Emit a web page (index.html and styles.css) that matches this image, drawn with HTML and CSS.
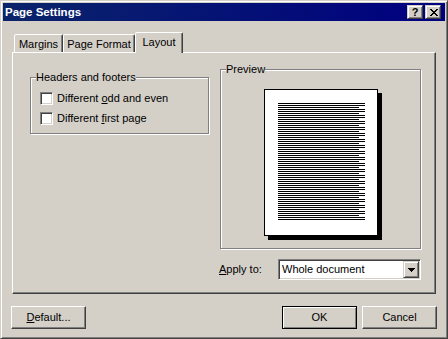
FILE: index.html
```html
<!DOCTYPE html>
<html>
<head>
<meta charset="utf-8">
<title>Page Settings</title>
<link rel="stylesheet" href="styles.css">
</head>
<body>
<div class="window">
  <div class="titlebar">
    <span class="title">Page Settings</span>
    <span class="cbtn help">?</span>
    <span class="cbtn close"><svg class="xglyph" width="8" height="7" viewBox="0 0 8 7" shape-rendering="crispEdges"><path d="M0 0h2v1H0z M6 0h2v1H6z M1 1h2v1H1z M5 1h2v1H5z M2 2h4v1H2z M3 3h2v1H3z M2 4h4v1H2z M1 5h2v1H1z M5 5h2v1H5z M0 6h2v1H0z M6 6h2v1H6z"/></svg></span>
  </div>

  <div class="tabs">
    <div class="tab t-margins">Margins</div>
    <div class="tab t-format">Page Format</div>
    <div class="tab selected t-layout">Layout</div>
  </div>

  <div class="panel">
    <div class="col-left">
      <div class="group hf">
        <div class="legend">Headers and footers</div>
        <div class="checks">
          <label class="check"><span class="box"></span><span>Different <u>o</u>dd and even</span></label>
          <label class="check"><span class="box"></span><span>Different <u>f</u>irst page</span></label>
        </div>
      </div>
    </div>
    <div class="col-right">
      <div class="group preview">
        <div class="legend">Preview</div>
        <div class="page-wrap">
          <div class="page"><div class="lines"></div></div>
        </div>
      </div>
      <div class="apply">
        <span class="apply-label"><u>A</u>pply to:</span>
        <div class="combo">
          <span class="combo-text">Whole document</span>
          <span class="combo-btn"><svg width="7" height="4" viewBox="0 0 7 4" shape-rendering="crispEdges"><path d="M0 0h7v1H0z M1 1h5v1H1z M2 2h3v1H2z M3 3h1v1H3z"/></svg></span>
        </div>
      </div>
    </div>
  </div>

  <div class="buttons">
    <button class="btn"><u>D</u>efault...</button>
    <span class="spacer"></span>
    <button class="btn default">OK</button>
    <button class="btn">Cancel</button>
  </div>
</div>
</body>
</html>
```
FILE: styles.css
```css
* {
  box-sizing: border-box;
}

html, body {
  margin: 0;
  padding: 0;
}

body {
  background: #d4d0c8;
  font: 11px/13px "Liberation Sans", Arial, sans-serif;
  color: #000;
}

u {
  text-decoration: underline;
  text-underline-offset: 1px;
}

/* window frame */
.window {
  width: 448px;
  height: 339px;
  background: #d4d0c8;
  border: 1px solid;
  border-color: #d4d0c8 #404040 #404040 #d4d0c8;
  box-shadow: inset 1px 1px #fff, inset -1px -1px #808080;
  padding: 2px;
  display: flex;
  flex-direction: column;
}

/* title bar */
.titlebar {
  height: 18px;
  flex: none;
  background: linear-gradient(to right, #0a246a, #000080);
  display: flex;
  align-items: center;
  padding: 0 4px 0 2px;
  color: #fff;
}

.title {
  flex: 1;
  font-weight: bold;
  font-size: 11.5px;
  padding-top: 1px;
}

.cbtn {
  width: 16px;
  height: 14px;
  background: #d4d0c8;
  border: 1px solid;
  border-color: #d4d0c8 #404040 #404040 #d4d0c8;
  box-shadow: inset 1px 1px #fff, inset -1px -1px #808080;
  color: #000;
  display: flex;
  justify-content: center;
  align-items: center;
}

.help {
  margin-right: 2px;
  font-weight: bold;
  font-size: 11px;
  line-height: 12px;
}

.xglyph {
  display: block;
  margin: 0 0 0 1px;
  fill: #000;
}

/* tabs */
.tabs {
  display: flex;
  align-items: flex-end;
  height: 21px;
  margin: 11px 0 -1px 11px;
  flex: none;
}

.tab {
  height: 18px;
  margin-bottom: 1px;
  border: 1px solid;
  border-bottom: 0;
  border-color: #fff #404040 transparent #fff;
  box-shadow: inset -1px 0 #808080;
  border-radius: 2px 2px 0 0;
  padding-top: 3px;
  text-align: center;
  background: #d4d0c8;
  white-space: nowrap;
}

.t-margins { width: 49px; }
.t-format { width: 72px; }
.t-layout { width: 48px; }

.tab.selected {
  position: relative;
  z-index: 1;
  height: 21px;
  margin-bottom: 0;
}

/* panel */
.panel {
  flex: none;
  margin-left: 9px;
  width: 424px;
  height: 242px;
  border: 1px solid;
  border-color: #fff #404040 #404040 #fff;
  box-shadow: inset -1px -1px #808080;
  display: flex;
  align-items: flex-start;
  padding-left: 17px;
}

.col-left {
  margin-top: 24px;
  width: 179px;
}

.col-right {
  margin-top: 16px;
  margin-left: 11px;
  width: 201px;
}

/* etched group box */
.group {
  border: 1px solid #808080;
  box-shadow: inset 1px 1px #fff, 1px 1px #fff;
}

.legend {
  margin: -7px 0 0 5px;
  width: fit-content;
  background: #d4d0c8;
  line-height: 13px;
  white-space: nowrap;
}

.hf {
  width: 179px;
  padding: 0 0 8px 0;
}

.checks {
  padding: 8px 0 0 9px;
  display: flex;
  flex-direction: column;
  gap: 7px;
}

.check {
  display: flex;
  align-items: center;
  gap: 4px;
  height: 13px;
  white-space: nowrap;
}

.box {
  width: 13px;
  height: 13px;
  flex: none;
  background: #fff;
  border: 1px solid;
  border-color: #808080 #fff #fff #808080;
  box-shadow: inset 1px 1px #404040, inset -1px -1px #d4d0c8;
}

/* preview */
.preview {
  width: 201px;
  padding: 0 0 12px 0;
}

.page-wrap {
  padding: 13px 0 0 43px;
}

.page {
  width: 114px;
  height: 147px;
  background: #fff;
  border: 1px solid #000;
  box-shadow: 4px 4px 0 #000;
  padding: 13px 0 0 13px;
}

.lines {
  width: 87px;
  height: 117px;
  background-image:
    repeating-linear-gradient(to bottom, #000 0 1px, transparent 1px 2px),
    repeating-linear-gradient(to bottom, #000 0 1px, transparent 1px 2px, #000 2px 3px, transparent 3px 6px);
  background-size: 81px 117px, 6px 117px;
  background-position: 0 0, 81px 0;
  background-repeat: no-repeat;
}

/* apply row */
.apply {
  margin: 10px 0 0 -1px;
  display: flex;
  align-items: center;
  height: 21px;
}

.apply-label {
  width: 59px;
  flex: none;
  white-space: nowrap;
}

.combo {
  width: 144px;
  height: 21px;
  background: #fff;
  border: 1px solid;
  border-color: #808080 #fff #fff #808080;
  box-shadow: inset 1px 1px #404040, inset -1px -1px #d4d0c8;
  padding: 1px;
  display: flex;
  align-items: center;
}

.combo-text {
  flex: 1;
  padding-left: 2px;
  white-space: nowrap;
}

.combo-btn {
  width: 16px;
  height: 17px;
  flex: none;
  background: #d4d0c8;
  border: 1px solid;
  border-color: #d4d0c8 #404040 #404040 #d4d0c8;
  box-shadow: inset 1px 1px #fff, inset -1px -1px #808080;
  display: flex;
  justify-content: center;
  align-items: center;
}

.combo-btn svg {
  display: block;
  fill: #000;
}

/* bottom buttons */
.buttons {
  flex: none;
  display: flex;
  margin-top: 12px;
  padding: 0 8px;
  gap: 5px;
}

.spacer {
  flex: 1;
}

.btn {
  width: 75px;
  height: 23px;
  padding: 0;
  margin: 0;
  font: inherit;
  color: #000;
  background: #d4d0c8;
  border: 1px solid;
  border-color: #fff #404040 #404040 #fff;
  box-shadow: inset -1px -1px #808080;
  border-radius: 0;
  line-height: 13px;
  text-align: center;
}

.btn.default {
  border-color: #000;
  box-shadow: inset 1px 1px #fff, inset -1px -1px #808080;
}
```
